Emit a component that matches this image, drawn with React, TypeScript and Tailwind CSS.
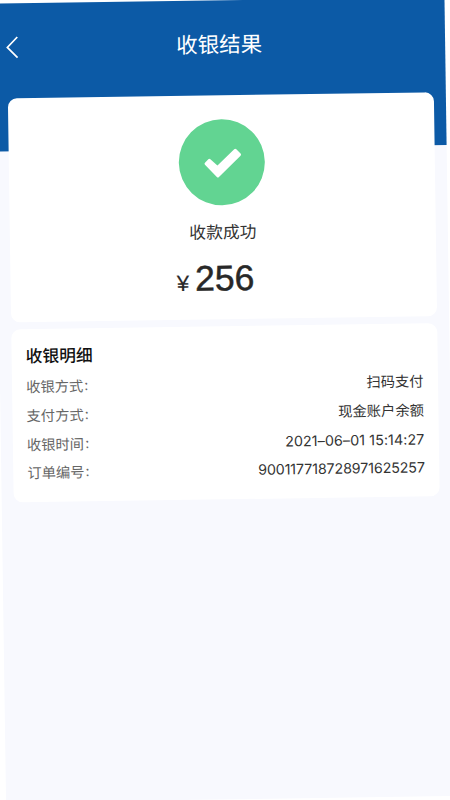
const details = [
  { label: '收银方式', value: '扫码支付', spacing: 'tracking-normal' },
  { label: '支付方式', value: '现金账户余额', spacing: 'tracking-normal' },
  { label: '收银时间', value: '2021–06–01 15:14:27', spacing: 'tracking-[0.07px]' },
  { label: '订单编号', value: '900117718728971625257', spacing: 'tracking-[-0.14px]' },
];

export default function App() {
  return (
    <div className="h-[800px] w-[450px] overflow-hidden bg-white font-['Inter','Noto_Sans_CJK_SC',sans-serif]">
      <main className="h-[799px] w-[450px] origin-top-left translate-x-[-5.5px] translate-y-[3.6px] rotate-[-0.83deg] bg-[#f8f9fe]">
        <Header />
        <div className="mx-3 -mt-[53px] flex flex-col gap-[7px]">
          <ResultCard />
          <DetailCard />
        </div>
      </main>
    </div>
  );
}

function Header() {
  return (
    <header className="h-[148px] bg-[#0c5aa6] pt-[22px] text-white">
      <div className="grid h-11 grid-cols-[48px_1fr_48px] items-center">
        <button type="button" aria-label="返回" className="pl-[10px]">
          <svg width="14" height="24" viewBox="0 0 14 24" fill="none" stroke="currentColor" strokeWidth="1.7">
            <path d="M12.3 1.7 2.2 12l10.1 10.3" />
          </svg>
        </button>
        <h1 className="pt-px pr-[2px] text-center text-[21.5px] leading-none">收银结果</h1>
      </div>
    </header>
  );
}

function ResultCard() {
  return (
    <section className="flex h-[224px] flex-col items-center rounded-[9px] bg-white pt-6">
      <div className="flex size-[86px] items-center justify-center rounded-full bg-[#62d492] pl-[2px] pt-px">
        <svg width="40" height="30" viewBox="0 0 40 30" className="text-white" aria-hidden="true">
          <path
            d="M3.2 15.2 6.6 11.8 14.6 19.2 32.6 2.2 36.8 6.6 14.9 27.6Z"
            fill="currentColor"
            stroke="currentColor"
            strokeWidth="3"
            strokeLinejoin="round"
          />
        </svg>
      </div>
      <p className="mt-[14.5px] text-[16.8px] leading-6 text-[#333]">收款成功</p>
      <p className="mt-[14.5px] flex items-baseline gap-[6px] pr-[16px] font-['Liberation_Sans',sans-serif] leading-10 text-[#282828]">
        <span className="text-[22px] [-webkit-text-stroke:0.2px]">¥</span>
        <span className="text-[35.5px] [-webkit-text-stroke:0.5px]">256</span>
      </p>
    </section>
  );
}

function DetailCard() {
  return (
    <section className="h-[173px] rounded-[9px] bg-white px-[14.5px] pt-[15px]">
      <h2 className="-ml-[0.5px] text-[16.8px] leading-6 font-medium text-[#111]">收银明细</h2>
      <dl className="mt-[5px]">
        {details.map((row) => (
          <div key={row.label} className="flex h-[28.75px] items-center justify-between text-[14.3px] leading-none">
            <dt className="-ml-[0.5px] text-[#666]">
              {row.label}
              <span className="ml-px inline-block -translate-y-px">:</span>
            </dt>
            <dd className={`text-[#333] ${row.spacing}`}>{row.value}</dd>
          </div>
        ))}
      </dl>
    </section>
  );
}
